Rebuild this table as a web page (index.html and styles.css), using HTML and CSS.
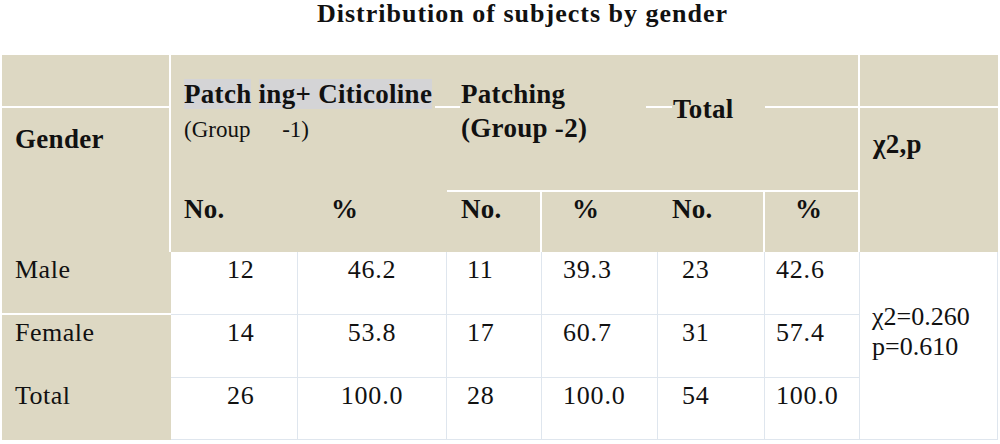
FILE: index.html
```html
<!DOCTYPE html>
<html lang="en">
<head>
<meta charset="utf-8">
<title>Distribution of subjects by gender</title>
<link rel="stylesheet" href="styles.css">
</head>
<body>
<h1 class="title">Distribution of subjects by gender</h1>
<div class="tbl">
  <div class="hd a"></div>
  <div class="hd gen">Gender</div>
  <div class="hd g1"><span class="hl">Patch</span> <span class="hl">ing+ Citicoline</span><br><span class="grp">(Group <span class="sp">-1)</span></span></div>
  <div class="hd g2">Patching<br>(Group -2)</div>
  <div class="hd tot">Total</div>
  <div class="hd f"></div>
  <div class="hd chi">χ2,p</div>
  <div class="hd sub n1">No.</div>
  <div class="hd sub p1">%</div>
  <div class="hd sub n2">No.</div>
  <div class="hd sub p2">%</div>
  <div class="hd sub n3">No.</div>
  <div class="hd sub p3">%</div>

  <div class="lab male">Male</div>
  <div class="lab fem">Female</div>
  <div class="lab ttl">Total</div>
  <div class="xv">χ2=0.260<br>p=0.610</div>

  <div class="d c1">12</div>
  <div class="d c2">46.2</div>
  <div class="d c3">11</div>
  <div class="d c4">39.3</div>
  <div class="d c5">23</div>
  <div class="d c6">42.6</div>

  <div class="d c1">14</div>
  <div class="d c2">53.8</div>
  <div class="d c3">17</div>
  <div class="d c4">60.7</div>
  <div class="d c5">31</div>
  <div class="d c6">57.4</div>

  <div class="d c1">26</div>
  <div class="d c2">100.0</div>
  <div class="d c3">28</div>
  <div class="d c4">100.0</div>
  <div class="d c5">54</div>
  <div class="d c6">100.0</div>
</div>
</body>
</html>
```

FILE: styles.css
```css
* { box-sizing: border-box; }

body {
  margin: 0;
  background: #ffffff;
  color: #111111;
  font-family: "Liberation Serif", "Times New Roman", serif;
}

.title {
  margin: 0;
  height: 26px;
  padding-left: 45px;
  text-align: center;
  font-size: 26px;
  line-height: 28px;
  letter-spacing: 1px;
  font-weight: bold;
}

.tbl {
  display: grid;
  margin: 29px 0 0 2px;
  width: 996px;
  grid-template-columns: 169px 127px 149px 95px 116px 107px 95px 138px;
  grid-template-rows: 53px 84px 60px 63px 63px 62px;
  grid-template-areas:
    "a    g1 g1 g2 g2 tot tot f"
    "gen  g1 g1 g2 g2 tot tot chi"
    "gen  n1 p1 n2 p2 n3  p3  chi"
    "male .  .  .  .  .   .   xv"
    "fem  .  .  .  .  .   .   xv"
    "ttl  .  .  .  .  .   .   xv";
}

.hd {
  background: #ddd8c3;
  font-weight: bold;
  font-size: 27px;
  letter-spacing: 0.3px;
  line-height: 30px;
  white-space: nowrap;
}

.a { grid-area: a; border-right: 2px solid #fff; border-bottom: 2px solid #fff; }
.gen { grid-area: gen; border-right: 2px solid #fff; padding: 16px 0 0 13px; }
.f { grid-area: f; border-bottom: 2px solid #fff; }
.chi { grid-area: chi; padding: 21px 0 0 13px; }

.g1, .g2, .tot {
  position: relative;
  line-height: 34px;
}

.g1 { grid-area: g1; padding: 22px 0 0 13px; }
.g2 { grid-area: g2; padding: 22px 0 0 14px; border-bottom: 2px solid #fff; }
.tot { grid-area: tot; padding: 37px 0 0 15px; border-bottom: 2px solid #fff; border-right: 2px solid #fff; }

.g1::after, .g2::before, .g2::after, .tot::before, .tot::after {
  content: "";
  position: absolute;
  top: 51px;
  height: 2px;
  background: #fff;
}
.g1::after { left: 264px; width: 12px; }
.g2::before { left: 0; width: 13px; }
.g2::after { left: 199px; width: 12px; }
.tot::before { left: 0; width: 14px; }
.tot::after { left: 107px; width: 93px; }

.hl { background: #d4d4d6; }

.grp {
  font-weight: normal;
  font-size: 23px;
  letter-spacing: 0;
}
.sp { margin-left: 26px; }

.sub { padding-top: 2px; }
.n1 { grid-area: n1; padding-left: 13px; }
.p1 { grid-area: p1; padding-left: 33px; }
.n2 { grid-area: n2; padding-left: 14px; border-right: 2px solid #fff; }
.p2 { grid-area: p2; padding-left: 30px; }
.n3 { grid-area: n3; padding-left: 14px; border-right: 2px solid #fff; }
.p3 { grid-area: p3; padding-left: 30px; border-right: 2px solid #fff; }

.lab {
  background: #ddd8c3;
  font-size: 26px;
  letter-spacing: 0.5px;
  line-height: 30px;
  padding: 3px 0 0 13px;
}
.male { grid-area: male; border-bottom: 2px solid #fff; }
.fem { grid-area: fem; }
.ttl { grid-area: ttl; }

.d {
  background: #fff;
  border-right: 1px solid #dfe6ee;
  border-bottom: 1px solid #dfe6ee;
  font-size: 26px;
  letter-spacing: 0.8px;
  line-height: 30px;
  padding-top: 3px;
}
.c1 { padding-left: 56px; }
.c2 { text-align: center; }
.c3 { padding-left: 20px; }
.c4 { padding-left: 21px; }
.c5 { padding-left: 24px; }
.c6 { padding-left: 11px; }

.xv {
  grid-area: xv;
  background: #fff;
  border-right: 1px solid #dfe6ee;
  border-bottom: 1px solid #dfe6ee;
  font-size: 26px;
  line-height: 30px;
  padding: 50px 0 0 12px;
}
```
